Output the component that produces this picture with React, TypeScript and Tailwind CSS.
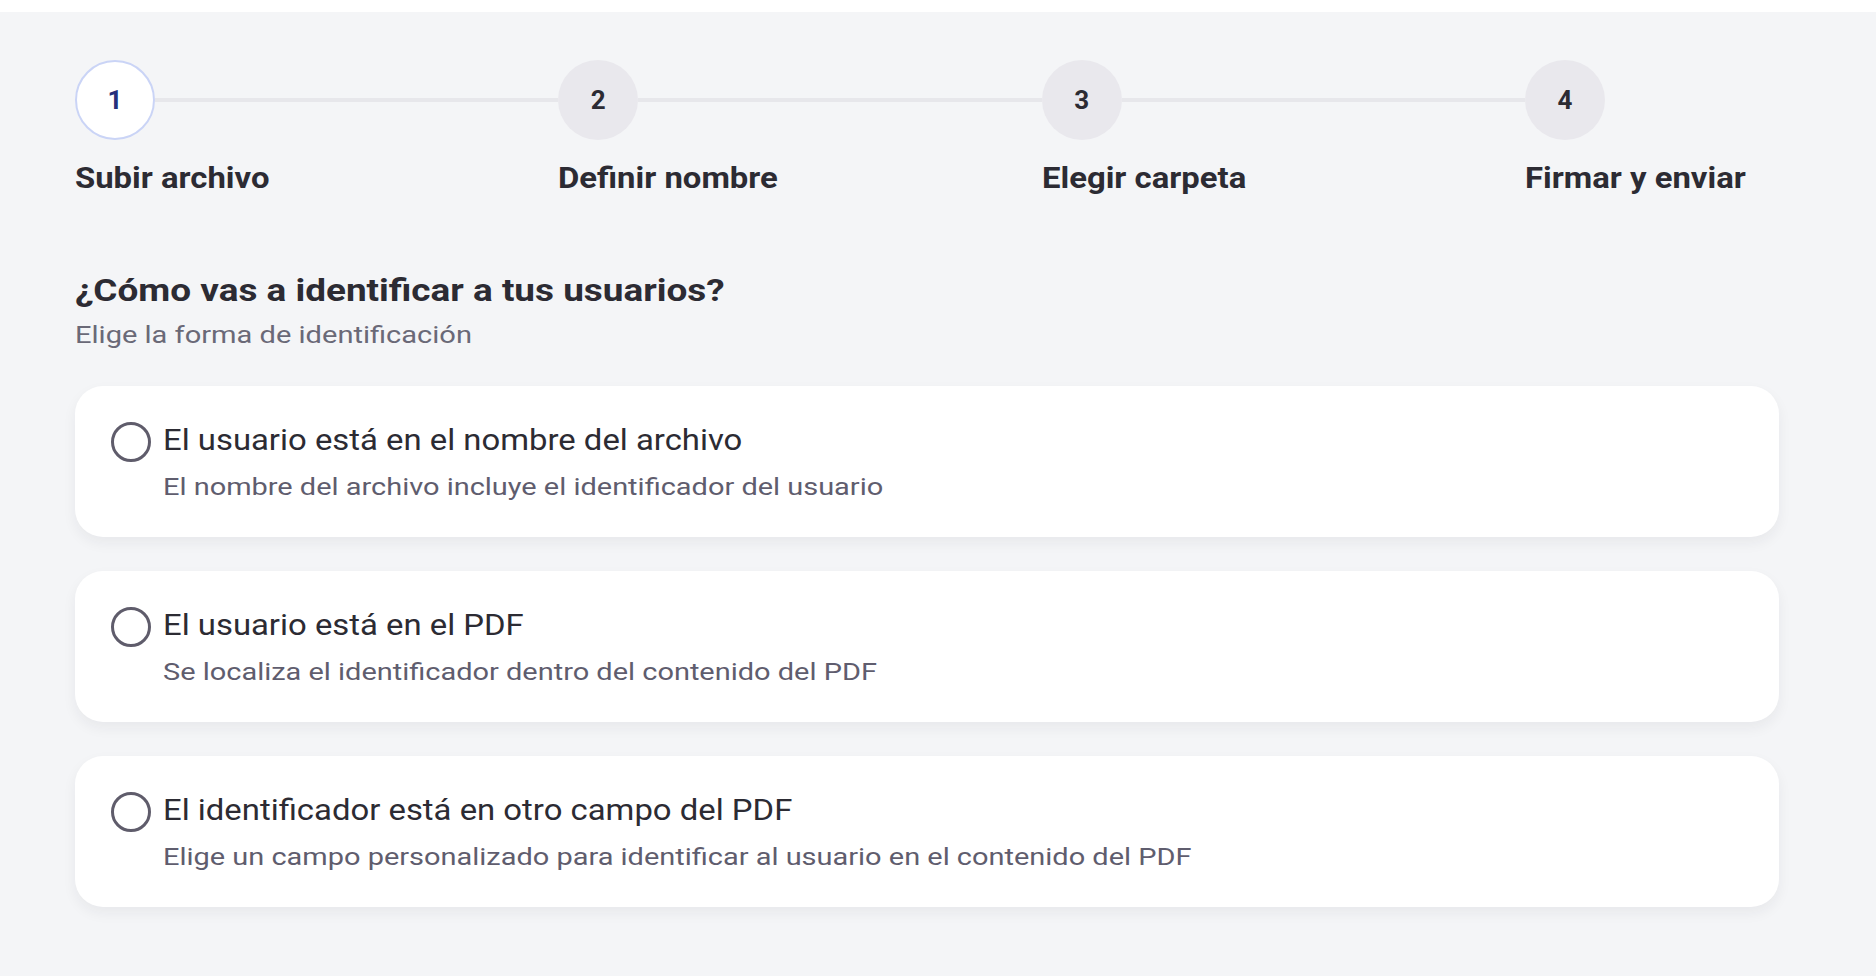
const steps = [
  { n: 1, label: "Subir archivo" },
  { n: 2, label: "Definir nombre" },
  { n: 3, label: "Elegir carpeta" },
  { n: 4, label: "Firmar y enviar" },
]

const options = [
  {
    title: "El usuario está en el nombre del archivo",
    desc: "El nombre del archivo incluye el identificador del usuario",
  },
  {
    title: "El usuario está en el PDF",
    desc: "Se localiza el identificador dentro del contenido del PDF",
  },
  {
    title: "El identificador está en otro campo del PDF",
    desc: "Elige un campo personalizado para identificar al usuario en el contenido del PDF",
  },
]

function Stepper() {
  return (
    <div className="flex">
      {steps.map((s, i) => {
        const active = i === 0
        const last = i === steps.length - 1
        return (
          <div key={s.n} className={last ? "w-[254px] shrink-0" : "flex-1"}>
            <div className="flex items-center">
              <div
                className={
                  active
                    ? "w-[80px] h-[80px] shrink-0 rounded-full bg-white border-2 border-[#cad4f6] flex items-center justify-center text-[26px] font-bold text-[#26307a]"
                    : "w-[80px] h-[80px] shrink-0 rounded-full bg-[#e9e8ed] flex items-center justify-center text-[26px] font-bold text-[#2c2b33]"
                }
              >
                {s.n}
              </div>
              {!last && <div className="flex-1 h-[4px] bg-[#e7e7eb]" />}
            </div>
            <div className="w-fit mt-5 text-[30px] leading-[36px] font-bold text-[#2c2b33] whitespace-nowrap origin-left scale-x-[1.095]">
              {s.label}
            </div>
          </div>
        )
      })}
    </div>
  )
}

function OptionCard({ title, desc }: { title: string; desc: string }) {
  return (
    <label className="flex items-start gap-3 bg-white rounded-[28px] pl-9 pr-8 pt-9 pb-[34px] shadow-[0_6px_14px_rgba(30,30,50,0.06)] cursor-pointer">
      <span className="w-[40px] h-[40px] shrink-0 rounded-full border-[3px] border-[#5f5c6b]" />
      <span className="flex flex-col items-start">
        <span className="block text-[29px] leading-[36px] text-[#2c2b33] whitespace-nowrap origin-left scale-x-[1.133]">
          {title}
        </span>
        <span className="block mt-[13px] text-[24px] leading-[32px] text-[#5f5d6e] whitespace-nowrap origin-left scale-x-[1.206]">
          {desc}
        </span>
      </span>
    </label>
  )
}

export default function App() {
  return (
    <div className="min-h-screen bg-white pt-3" style={{ fontFamily: "Roboto, 'Liberation Sans', sans-serif" }}>
      <div className="min-h-[964px] bg-[#f4f5f7] pl-[75px] pr-[97px] pt-12 pb-10">
        <Stepper />

        <section className="mt-[76px]">
          <h1 className="w-fit text-[31px] leading-[38px] font-bold text-[#2c2b33] origin-left scale-x-[1.19]">
            ¿Cómo vas a identificar a tus usuarios?
          </h1>
          <p className="w-fit mt-[9px] text-[24px] leading-[32px] text-[#6a6977] origin-left scale-x-[1.21]">
            Elige la forma de identificación
          </p>
        </section>

        <div className="mt-[35px] flex flex-col gap-[34px]">
          {options.map((o) => (
            <OptionCard key={o.title} title={o.title} desc={o.desc} />
          ))}
        </div>
      </div>
    </div>
  )
}
